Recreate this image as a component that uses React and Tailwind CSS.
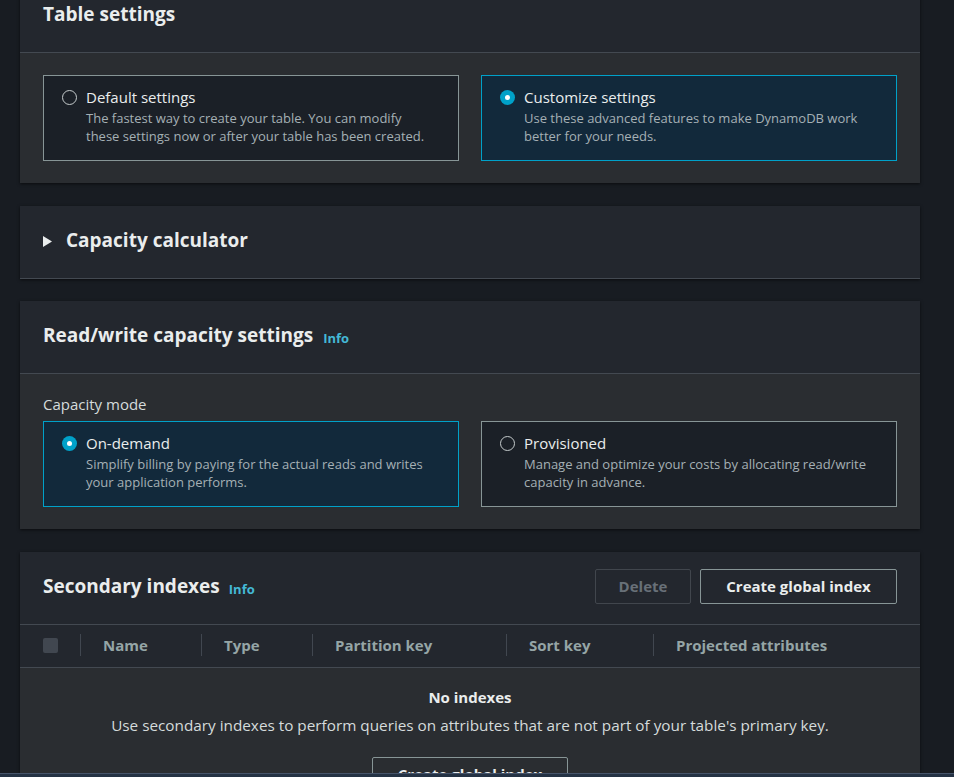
import React from "react";

const font = { fontFamily: '"Open Sans", "Noto Sans", sans-serif' };

function Radio({ checked }) {
  return checked ? (
    <span className="mt-[3px] flex h-[15px] w-[15px] shrink-0 items-center justify-center rounded-full bg-[#00a1c9]">
      <span className="h-[5px] w-[5px] rounded-full bg-white" />
    </span>
  ) : (
    <span className="mt-[3px] h-[15px] w-[15px] shrink-0 rounded-full border border-[#c5cbcc]" />
  );
}

function Tile({ checked, title, desc }) {
  return (
    <div
      className={`flex h-[86px] gap-[9px] border pt-[11px] pr-[24px] pl-[18px] ${
        checked ? "border-[#00a1c9] bg-[#12293b]" : "border-[#879596] bg-[#1b2027]"
      }`}
    >
      <Radio checked={checked} />
      <div>
        <p className="mb-[2px] text-[15px] leading-[20px] text-[#eaeded]">{title}</p>
        <p className="text-[13px] leading-[18px] text-[#a5b0b5]">{desc}</p>
      </div>
    </div>
  );
}

function Info() {
  return <span className="ml-[9px] text-[13px] font-bold text-[#44b9d6]">Info</span>;
}

function Card({ children, className = "" }) {
  return <div className={`bg-[#2a2d31] shadow-[0_1px_3px_rgba(0,0,0,0.6)] ${className}`}>{children}</div>;
}

function Header({ children }) {
  return (
    <div className="flex h-[73px] items-center border-b border-[#434951] bg-[#23272e] px-[23px] pb-[3px]">
      {children}
    </div>
  );
}

const columns = ["Name", "Type", "Partition key", "Sort key", "Projected attributes"];

export default function App() {
  return (
    <div className="relative h-[777px] overflow-hidden bg-[#181c22]" style={font}>
      <div className="mr-[34px] ml-[20px] flex flex-col -mt-[20px]">
        {/* Table settings */}
        <Card>
          <Header>
            <h2 className="text-[19px] font-bold text-[#eaeded]">Table settings</h2>
          </Header>
          <div className="grid grid-cols-2 gap-[22px] px-[23px] py-[22px]">
            <Tile
              title="Default settings"
              desc="The fastest way to create your table. You can modify these settings now or after your table has been created."
            />
            <Tile
              checked
              title="Customize settings"
              desc="Use these advanced features to make DynamoDB work better for your needs."
            />
          </div>
        </Card>

        {/* Capacity calculator */}
        <div className="mt-[23px] flex h-[73px] items-center gap-[14px] border-b border-[#434951] bg-[#23272e] px-[23px] pb-[3px] shadow-[0_1px_3px_rgba(0,0,0,0.6)]">
          <svg width="9" height="11" viewBox="0 0 9 11" className="mt-[2px]">
            <polygon points="0,0 9,5.5 0,11" fill="#eaeded" />
          </svg>
          <h2 className="text-[19px] font-bold text-[#eaeded]">Capacity calculator</h2>
        </div>

        {/* Read/write capacity */}
        <Card className="mt-[22px]">
          <Header>
            <h2 className="text-[19px] font-bold text-[#eaeded]">Read/write capacity settings</h2>
            <span className="ml-[1px] mt-[2px]">
              <Info />
            </span>
          </Header>
          <div className="px-[23px] pt-[20px] pb-[22px]">
            <p className="mb-[7px] text-[15px] leading-[20px] text-[#d5dbdb]">Capacity mode</p>
            <div className="grid grid-cols-2 gap-[22px]">
              <Tile
                checked
                title="On-demand"
                desc="Simplify billing by paying for the actual reads and writes your application performs."
              />
              <Tile
                title="Provisioned"
                desc="Manage and optimize your costs by allocating read/write capacity in advance."
              />
            </div>
          </div>
        </Card>

        {/* Secondary indexes */}
        <Card className="mt-[23px]">
          <Header>
            <h2 className="text-[19px] font-bold text-[#eaeded]">Secondary indexes</h2>
            <span className="mt-[2px]">
              <Info />
            </span>
            <div className="ml-auto flex gap-[9px]">
              <button className="h-[35px] w-[96px] rounded-[2px] border border-[#41464d] text-[15px] font-bold text-[#687078]">
                Delete
              </button>
              <button className="h-[35px] w-[197px] rounded-[2px] border border-[#879596] text-[15px] font-bold text-[#eaeded]">
                Create global index
              </button>
            </div>
          </Header>
          <div className="grid h-[43px] grid-cols-[60px_121px_111px_194px_147px_1fr] items-center border-b border-[#434951] bg-[#23272e] pb-[2px]">
            <div className="pl-[23px]">
              <div className="h-[15px] w-[15px] rounded-[2px] bg-[#414750]" />
            </div>
            {columns.map((label) => (
              <div key={label} className="flex items-center">
                <span className="h-[22px] w-px bg-[#414750]" />
                <span className="pl-[22px] text-[15px] font-bold text-[#95a5a6]">{label}</span>
              </div>
            ))}
          </div>
          <div className="flex flex-col items-center pt-[18px] pb-[30px]">
            <p className="text-[15px] font-bold leading-[22px] text-[#eaeded]">No indexes</p>
            <p className="mt-[6px] text-[15.3px] leading-[22px] text-[#d5dbdb]">
              Use secondary indexes to perform queries on attributes that are not part of your table's primary key.
            </p>
            <button className="mt-[21px] h-[35px] w-[196px] rounded-[2px] border border-[#879596] text-[15px] font-bold text-[#eaeded]">
              Create global index
            </button>
          </div>
        </Card>
      </div>
      <div className="fixed right-0 bottom-0 left-0 h-[4px] border-t border-[#46546a] bg-[#243244]" />
    </div>
  );
}
